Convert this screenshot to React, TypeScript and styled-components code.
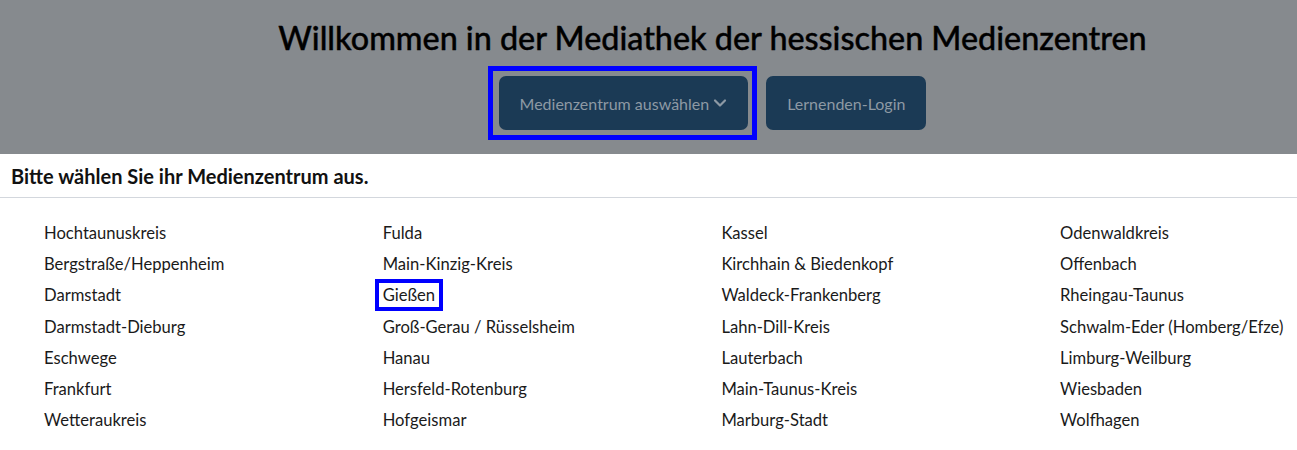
import styled, { createGlobalStyle } from "styled-components";

const GlobalStyle = createGlobalStyle`
  body {
    margin: 0;
    background: #868a8e;
    font-family: Lato, "Open Sans", sans-serif;
  }
`;

const centres = [
  [
    "Hochtaunuskreis",
    "Bergstraße/Heppenheim",
    "Darmstadt",
    "Darmstadt-Dieburg",
    "Eschwege",
    "Frankfurt",
    "Wetteraukreis",
  ],
  [
    "Fulda",
    "Main-Kinzig-Kreis",
    "Gießen",
    "Groß-Gerau / Rüsselsheim",
    "Hanau",
    "Hersfeld-Rotenburg",
    "Hofgeismar",
  ],
  [
    "Kassel",
    "Kirchhain & Biedenkopf",
    "Waldeck-Frankenberg",
    "Lahn-Dill-Kreis",
    "Lauterbach",
    "Main-Taunus-Kreis",
    "Marburg-Stadt",
  ],
  [
    "Odenwaldkreis",
    "Offenbach",
    "Rheingau-Taunus",
    "Schwalm-Eder (Homberg/Efze)",
    "Limburg-Weilburg",
    "Wiesbaden",
    "Wolfhagen",
  ],
];

const Chevron = () => (
  <svg width="14" height="14" viewBox="0 0 14 14" fill="none">
    <path d="M2 4.5 L7 9.5 L12 4.5" stroke="currentColor" strokeWidth="2.2" strokeLinecap="round" strokeLinejoin="round" />
  </svg>
);

export default function App() {
  return (
    <>
      <GlobalStyle />
      <Header>
        <Title>Willkommen in der Mediathek der hessischen Medienzentren</Title>
        <Actions>
          <FocusRing>
            <Button>
              Medienzentrum auswählen <Chevron />
            </Button>
          </FocusRing>
          <Button>Lernenden-Login</Button>
        </Actions>
      </Header>
      <Panel>
        <PanelHead>Bitte wählen Sie ihr Medienzentrum aus.</PanelHead>
        <Grid>
          {centres.map((col, i) => (
            <Column key={i}>
              {col.map((name) => (
                <Item key={name}>
                  <ItemLink focused={name === "Gießen"}>{name}</ItemLink>
                </Item>
              ))}
            </Column>
          ))}
        </Grid>
      </Panel>
    </>
  );
}

const Header = styled.header`
  height: 154px;
  box-sizing: border-box;
  padding: 18px 0 0 128px;
  display: flex;
  flex-direction: column;
  align-items: center;
`;

const Title = styled.h1`
  margin: 0;
  font-size: 32.3px;
  font-weight: 500;
  color: #000;
  line-height: 40px;
  -webkit-text-stroke: 0.4px #000;
`;

const Actions = styled.div`
  display: flex;
  gap: 18px;
  margin-top: 18px;
`;

const FocusRing = styled.span`
  display: flex;
  margin: -10px -9px -10px -11px;
  padding: 5px 4px 5px 6px;
  border: 5px solid #0000ff;
`;

const Button = styled.button`
  height: 54px;
  padding: 0 21px;
  border: none;
  border-radius: 7px;
  background: #1b3a55;
  color: #8d99a4;
  font-family: inherit;
  font-size: 16px;
  display: flex;
  align-items: center;
  gap: 4px;
  outline: none;
`;

const Panel = styled.section`
  background: #ffffff;
  height: 296px;
  overflow: hidden;
`;

const PanelHead = styled.h2`
  margin: 0;
  height: 44px;
  box-sizing: border-box;
  padding-left: 11px;
  display: flex;
  align-items: center;
  font-size: 20px;
  font-weight: 700;
  color: #111;
  border-bottom: 1px solid #d3d7dd;
`;

const Grid = styled.div`
  display: grid;
  grid-template-columns: repeat(3, 338.7px) auto;
  padding: 19px 0 0 44px;
`;

const Column = styled.ul`
  list-style: none;
  margin: 0;
  padding: 0;
`;

const Item = styled.li`
  height: 31.3px;
  display: flex;
  align-items: center;
`;

const ItemLink = styled.span<{ focused?: boolean }>`
  font-size: 16.6px;
  color: #1a1a1a;
  padding: 2px 4px;
  margin: 0 -4px;
  outline: ${({ focused }) => (focused ? "4px solid #0000ff" : "none")};
`;
